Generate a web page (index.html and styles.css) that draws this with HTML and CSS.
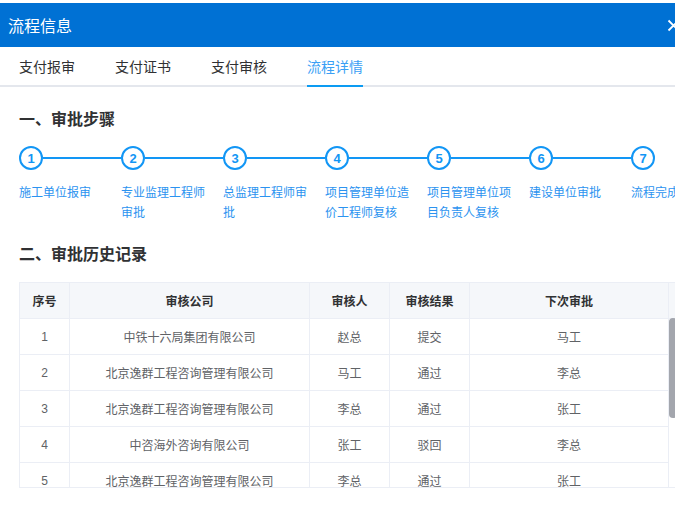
FILE: index.html
```html
<!DOCTYPE html>
<html lang="zh-CN">
<head>
<meta charset="utf-8">
<title>流程信息</title>
<link rel="stylesheet" href="styles.css">
</head>
<body>
<div class="dialog">
  <div class="dlg-header">
    <span class="dlg-title">流程信息</span>
    <svg class="dlg-close" width="13" height="13" viewBox="0 0 13 13"><path d="M1.5 1.5 L11.5 11.5 M11.5 1.5 L1.5 11.5" stroke="#fff" stroke-width="1.8" fill="none"/></svg>
  </div>
  <div class="tabs">
    <div class="tab"><span class="tab-label">支付报审</span></div>
    <div class="tab"><span class="tab-label">支付证书</span></div>
    <div class="tab"><span class="tab-label">支付审核</span></div>
    <div class="tab active"><span class="tab-label">流程详情</span></div>
  </div>
  <div class="content">
    <h2 class="section-title">一、审批步骤</h2>
    <div class="steps">
      <div class="step"><div class="step-head"><span class="num">1</span><span class="line"></span></div><div class="step-title">施工单位报审</div></div>
      <div class="step"><div class="step-head"><span class="num">2</span><span class="line"></span></div><div class="step-title">专业监理工程师审批</div></div>
      <div class="step"><div class="step-head"><span class="num">3</span><span class="line"></span></div><div class="step-title">总监理工程师审批</div></div>
      <div class="step"><div class="step-head"><span class="num">4</span><span class="line"></span></div><div class="step-title">项目管理单位造价工程师复核</div></div>
      <div class="step"><div class="step-head"><span class="num">5</span><span class="line"></span></div><div class="step-title">项目管理单位项目负责人复核</div></div>
      <div class="step"><div class="step-head"><span class="num">6</span><span class="line"></span></div><div class="step-title">建设单位审批</div></div>
      <div class="step"><div class="step-head"><span class="num">7</span></div><div class="step-title">流程完成</div></div>
    </div>
    <h2 class="section-title second">二、审批历史记录</h2>
    <div class="tbl">
      <div class="row head">
        <div class="cell c1">序号</div>
        <div class="cell c2">审核公司</div>
        <div class="cell c3">审核人</div>
        <div class="cell c4">审核结果</div>
        <div class="cell c5">下次审批</div>
        <div class="cell gutter"></div>
      </div>
      <div class="tbody">
        <div class="row"><div class="cell c1">1</div><div class="cell c2">中铁十六局集团有限公司</div><div class="cell c3">赵总</div><div class="cell c4">提交</div><div class="cell c5">马工</div></div>
        <div class="row"><div class="cell c1">2</div><div class="cell c2">北京逸群工程咨询管理有限公司</div><div class="cell c3">马工</div><div class="cell c4">通过</div><div class="cell c5">李总</div></div>
        <div class="row"><div class="cell c1">3</div><div class="cell c2">北京逸群工程咨询管理有限公司</div><div class="cell c3">李总</div><div class="cell c4">通过</div><div class="cell c5">张工</div></div>
        <div class="row"><div class="cell c1">4</div><div class="cell c2">中咨海外咨询有限公司</div><div class="cell c3">张工</div><div class="cell c4">驳回</div><div class="cell c5">李总</div></div>
        <div class="row"><div class="cell c1">5</div><div class="cell c2">北京逸群工程咨询管理有限公司</div><div class="cell c3">李总</div><div class="cell c4">通过</div><div class="cell c5">张工</div></div>
        <div class="row"><div class="cell c1">6</div><div class="cell c2">中咨海外咨询有限公司</div><div class="cell c3">张工</div><div class="cell c4">通过</div><div class="cell c5">李总</div></div>
        <div class="row"><div class="cell c1">7</div><div class="cell c2">北京逸群工程咨询管理有限公司</div><div class="cell c3">李总</div><div class="cell c4">通过</div><div class="cell c5">王总</div></div>
        <div class="row"><div class="cell c1">8</div><div class="cell c2">中铁十六局集团有限公司</div><div class="cell c3">王总</div><div class="cell c4">通过</div><div class="cell c5">完成</div></div>
      </div>
      <div class="thumb"></div>
    </div>
  </div>
</div>
</body>
</html>
```

FILE: styles.css
```css
html, body {
  margin: 0;
  padding: 0;
  overflow: hidden;
  background: #fff;
}
body {
  font-family: "Noto Sans CJK SC", "Noto Sans", "Liberation Sans", sans-serif;
  width: 675px;
  height: 516px;
}
.dialog {
  width: 690px;
  padding-top: 3px;
  overflow: hidden;
  background: #fff;
}
.dlg-header {
  height: 44px;
  background: #0071d4;
  display: flex;
  align-items: center;
  padding: 0 10px 0 8px;
}
.dlg-title {
  color: #fff;
  font-size: 16px;
  line-height: 20px;
}
.dlg-close {
  margin-left: auto;
  display: block;
}
.tabs {
  display: flex;
  height: 40px;
  padding-left: 19px;
  box-shadow: inset 0 -2px 0 #e4e7ed;
}
.tab {
  padding: 0 20px;
  height: 40px;
  display: flex;
}
.tab:first-child {
  padding-left: 0;
}
.tab-label {
  font-size: 14px;
  line-height: 38px;
  height: 38px;
  color: #303133;
  border-bottom: 2px solid transparent;
}
.tab.active .tab-label {
  color: #3a9ff5;
  border-bottom-color: #0c9bf2;
}
.content {
  padding-left: 19px;
}
.section-title {
  margin: 19px 0 0;
  font-size: 16px;
  line-height: 24px;
  font-weight: bold;
  color: #303133;
}
.section-title.second {
  margin-top: 19px;
}
.steps {
  display: flex;
  margin-top: 16px;
}
.step {
  width: 102px;
  flex-shrink: 0;
}
.step-head {
  display: flex;
  align-items: center;
  height: 24px;
}
.num {
  width: 24px;
  height: 24px;
  box-sizing: border-box;
  border: 2px solid #1296f5;
  border-radius: 50%;
  display: flex;
  align-items: center;
  justify-content: center;
  font-family: "Liberation Sans", Arial, sans-serif;
  font-size: 13px;
  font-weight: bold;
  color: #1296f5;
  flex-shrink: 0;
}
.line {
  flex: 1;
  height: 2px;
  background: #1296f5;
}
.step-title {
  margin-top: 12px;
  width: 90px;
  font-size: 12px;
  line-height: 20px;
  color: #2b93f0;
}
.tbl {
  position: relative;
  margin-top: 17px;
  width: 700px;
  border-top: 1px solid #ebeef5;
  border-left: 1px solid #ebeef5;
  border-bottom: 1px solid #ebeef5;
  font-size: 12px;
}
.row {
  display: flex;
}
.cell {
  box-sizing: border-box;
  height: 36px;
  border-right: 1px solid #ebeef5;
  border-bottom: 1px solid #ebeef5;
  display: flex;
  align-items: center;
  justify-content: center;
  color: #606266;
  flex-shrink: 0;
}
.head .cell {
  background: #f5f7fa;
  color: #303133;
  font-weight: bold;
}
.head .cell.gutter {
  flex: 1;
  border-right: none;
}
.c1 { width: 50px; }
.c2 { width: 240px; }
.c3 { width: 80px; }
.c4 { width: 80px; }
.c5 { width: 199px; }
.c1 {
  font-family: "Liberation Sans", Arial, sans-serif;
}
.head .c1 {
  font-family: "Noto Sans CJK SC", sans-serif;
}
.tbody {
  width: 649px;
  height: 168px;
  overflow: hidden;
}
.thumb {
  position: absolute;
  left: 649px;
  top: 35px;
  width: 8px;
  height: 100px;
  background: #a3a6ad;
  border-radius: 4px;
}
```
